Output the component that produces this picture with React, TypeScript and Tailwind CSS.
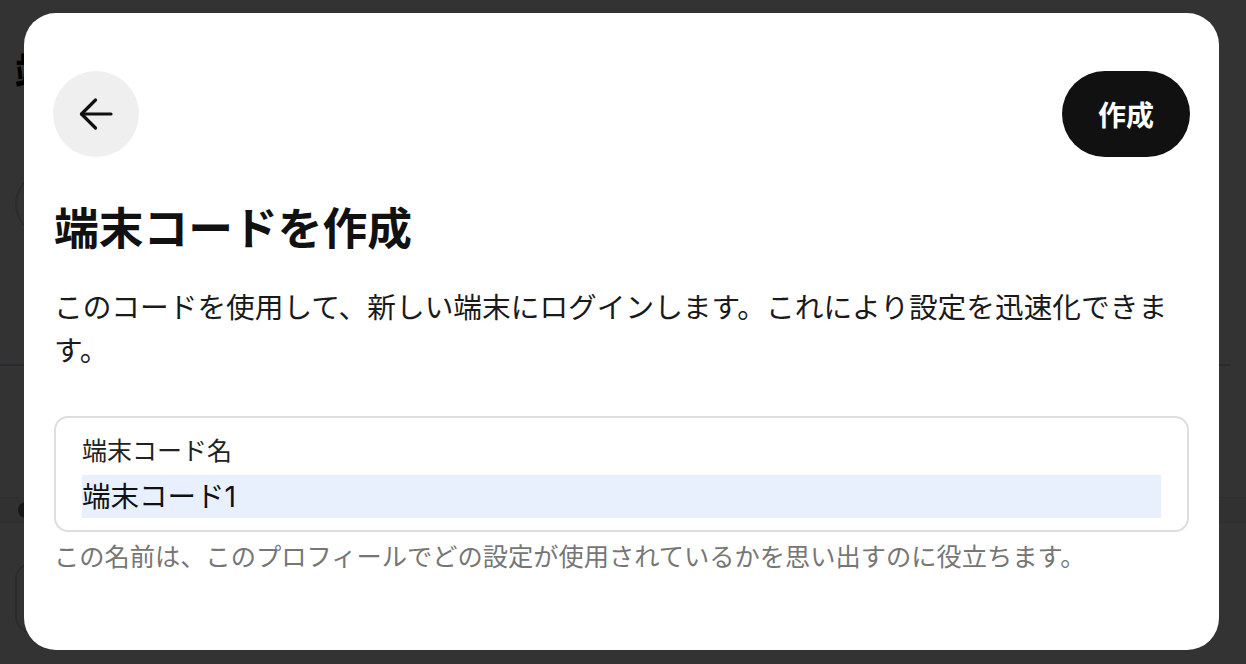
import React from "react";

const jp = { fontFamily: '"Noto Sans CJK JP", "Noto Sans", sans-serif' };

export default function App() {
  return (
    <div className="relative w-[1246px] h-[664px] overflow-hidden bg-white" style={jp}>
      {/* background page */}
      <div className="flex flex-col pl-[15px] pt-[44px]">
        <div className="text-[40px] font-bold leading-[52px] text-black">端末コード</div>
        <div className="mt-[76px] h-[64px] w-[400px] rounded-full border-2 border-gray-300" />
        <div className="mt-[128px] -ml-[15px] h-[2px] w-full bg-gray-300" />
        <div className="mt-[131px] -ml-[15px] flex h-[26px] items-center bg-gray-100 pl-[18px] border-y border-gray-200">
          <div className="h-[16px] w-[16px] rounded-full bg-gray-500" />
        </div>
        <div className="mt-[40px] h-[70px] w-[300px] rounded-[16px] border-2 border-gray-300" />
      </div>

      {/* overlay */}
      <div className="absolute inset-0 bg-black/80 flex items-start pt-[13px] pl-[24px]">
        <div className="w-[1195px] rounded-[32px] bg-white pl-[30px] pr-[29px] pt-[58px] pb-[77px]">
          <div className="flex items-center justify-between">
            <button className="flex h-[86px] w-[86px] items-center justify-center rounded-full bg-[#efefef] -ml-[1px]">
              <svg width="34" height="34" viewBox="0 0 34 34" fill="none" stroke="#111" strokeWidth="3.2" strokeLinecap="round" strokeLinejoin="round">
                <path d="M32 17H2.5" />
                <path d="M16.5 3L2.5 17l14 14" />
              </svg>
            </button>
            <button className="flex h-[86px] items-center rounded-full bg-[#111111] px-[36px] text-[28px] font-bold leading-none text-white">
              作成
            </button>
          </div>
          <h1 className="mt-[41px] text-[44.75px] font-bold leading-[56px] text-[#111]">端末コードを作成</h1>
          <p className="mt-[30px] text-[28.7px] leading-[43px] text-[#1a1a1a]">
            このコードを使用して、新しい端末にログインします。これにより設定を迅速化できます。
          </p>
          <div className="mt-[46px] mr-[1px] flex flex-col rounded-[14px] border-2 border-[#dedede] px-[26px] pt-[13px] pb-[12px]">
            <label className="text-[25px] leading-[36px] text-[#222]">端末コード名</label>
            <input
              readOnly
              value="端末コード1"
              className="mt-[8px] h-[43px] w-full bg-[#e8f0fe] text-[28.5px] leading-[43px] text-[#111] outline-none"
              style={{ fontFamily: '"Inter", "Noto Sans CJK JP", sans-serif' }}
            />
          </div>
          <p className="mt-[5px] text-[25.25px] leading-[36px] text-[#767676]">
            この名前は、このプロフィールでどの設定が使用されているかを思い出すのに役立ちます。
          </p>
        </div>
      </div>
    </div>
  );
}
